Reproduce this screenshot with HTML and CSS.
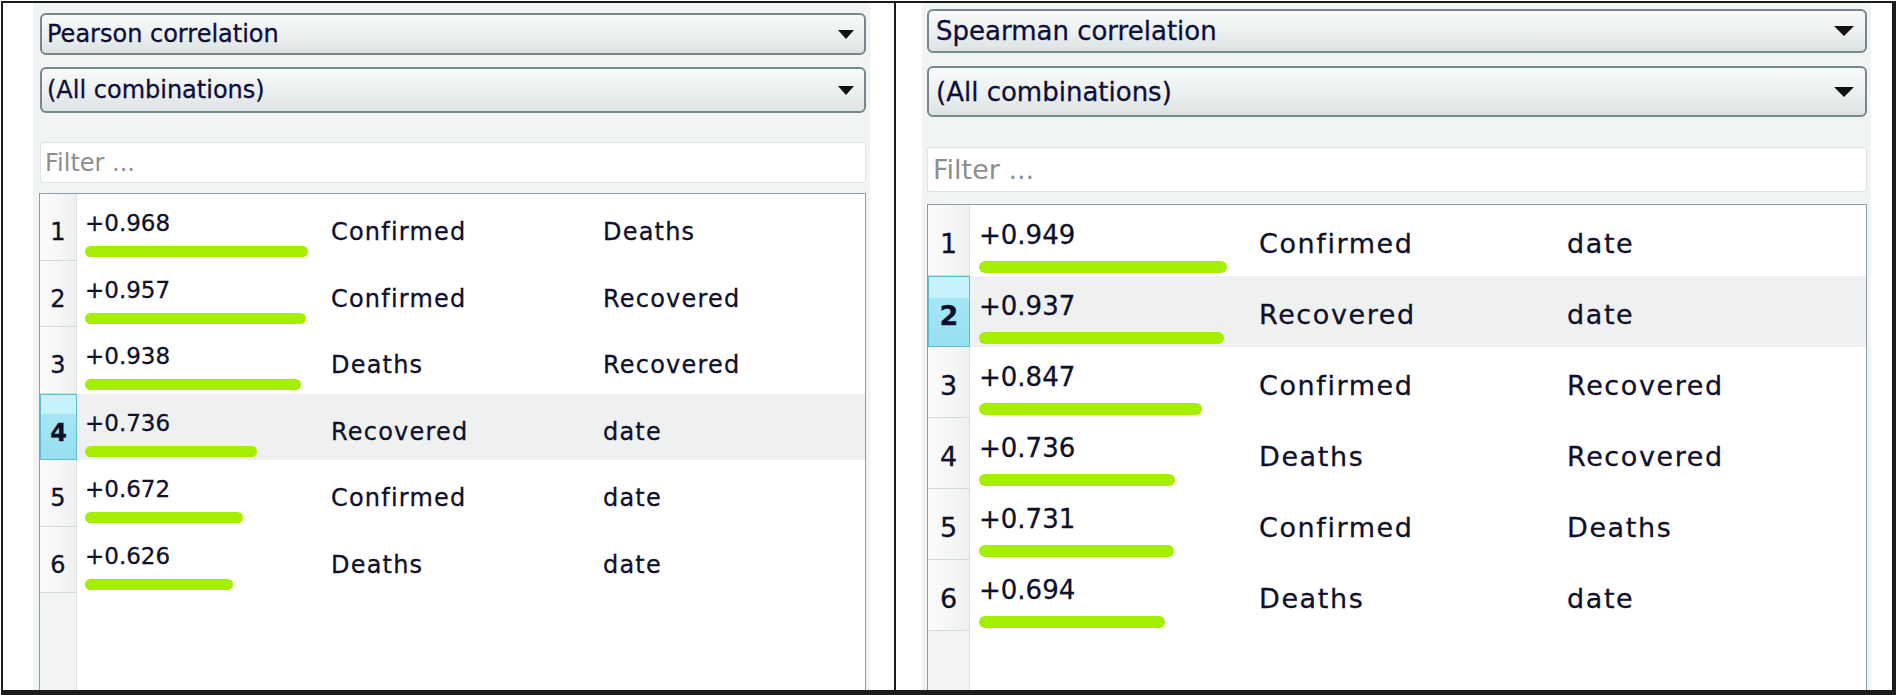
FILE: index.html
```html
<!DOCTYPE html>
<html lang="en">
<head>
  <meta charset="UTF-8" />
  <meta name="viewport" content="width=device-width, initial-scale=1.0"/>
  <title>Correlations</title>
  <link rel="stylesheet" href="styles.css">
</head>
<body>
  <div class="frame">
    <section class="panel panel-left">
      <div class="controls">
        <div class="combo"><span>Pearson correlation</span><i class="caret"></i></div>
        <div class="combo combo-second"><span>(All combinations)</span><i class="caret"></i></div>
        <div class="filter">Filter ...</div>
        <div class="list" id="pearson-list">
          <!-- Filled by JS -->
        </div>
      </div>
    </section>

    <section class="panel panel-right">
      <div class="controls">
        <div class="combo"><span>Spearman correlation</span><i class="caret"></i></div>
        <div class="combo combo-second"><span>(All combinations)</span><i class="caret"></i></div>
        <div class="filter">Filter ...</div>
        <div class="list" id="spearman-list">
          <!-- Filled by JS -->
        </div>
      </div>
    </section>
  </div>

  <script>
    const pearson = [
      [0.968, "Confirmed", "Deaths"],
      [0.957, "Confirmed", "Recovered"],
      [0.938, "Deaths", "Recovered"],
      [0.736, "Recovered", "date"],
      [0.672, "Confirmed", "date"],
      [0.626, "Deaths", "date"]
    ];

    const spearman = [
      [0.949, "Confirmed", "date"],
      [0.937, "Recovered", "date"],
      [0.847, "Confirmed", "Recovered"],
      [0.736, "Deaths", "Recovered"],
      [0.731, "Confirmed", "Deaths"],
      [0.694, "Deaths", "date"]
    ];

    // bar length grows with the score, scale differs per panel
    function fillList(id, rows, selected, slope, base) {
      let list = document.getElementById(id);
      list.innerHTML = "";

      rows.forEach((r, i) => {
        let row = document.createElement("div");
        row.className = "row" + (i + 1 === selected ? " selected" : "");
        let width = Math.round(slope * r[0] + base);
        row.innerHTML = `
          <div class="num">${i + 1}</div>
          <div class="score">
            <div class="value">+${r[0].toFixed(3)}</div>
            <div class="bar" style="width: ${width}px"></div>
          </div>
          <div class="name">${r[1]}</div>
          <div class="name">${r[2]}</div>
        `;
        list.appendChild(row);
      });

      let rest = document.createElement("div");
      rest.className = "row row-empty";
      rest.innerHTML = `<div class="num"></div>`;
      list.appendChild(rest);
    }

    fillList("pearson-list", pearson, 4, 219, 11);
    fillList("spearman-list", spearman, 2, 243, 17);
  </script>
</body>
</html>
```

FILE: styles.css
```css
* {
  box-sizing: border-box;
}

body {
  margin: 0;
  background: #fff;
  font-family: "DejaVu Sans", Verdana, sans-serif;
  color: #10102a;
  -webkit-text-stroke: 0.3px currentColor;
}

.frame {
  display: flex;
  height: 694px;
  margin: 1px 4px 0 1px;
  border: 2px solid #1c1c1c;
  border-right-width: 4px;
  border-bottom-width: 5px;
  overflow: hidden;
}

.panel {
  display: flex;
}

.panel-left {
  width: 893px;
  border-right: 2px solid #1c1c1c;
  padding: 0 24px 0 30px;
}

.panel-right {
  flex: 1;
  padding: 0 21px 0 26px;
}

.controls {
  flex: 1;
  display: flex;
  flex-direction: column;
  background: #f1f4f4;
}

.panel-left .controls {
  padding: 10px 4px 0 7px;
}

.panel-right .controls {
  padding: 6px 4px 0 5px;
}

/* dropdowns */
.combo {
  display: flex;
  align-items: center;
  justify-content: space-between;
  border: 2px solid #76888b;
  border-radius: 6px;
  background: linear-gradient(#f8fafa, #eef2f2 45%, #dce3e3);
  color: #0e0e3a;
}

.panel-left .combo {
  height: 42px;
  padding: 0 10px 0 5px;
  font-size: 24px;
}

.panel-left .combo-second {
  height: 46px;
  margin-top: 12px;
}

.panel-right .combo {
  height: 44px;
  padding: 0 11px 0 7px;
  font-size: 26px;
}

.panel-right .combo-second {
  height: 51px;
  margin-top: 13px;
}

.caret {
  width: 0;
  height: 0;
  border-left: 8px solid transparent;
  border-right: 8px solid transparent;
  border-top: 9px solid #111;
}

.panel-right .caret {
  border-left-width: 10px;
  border-right-width: 10px;
  border-top-width: 10px;
}

/* filter box */
.filter {
  display: flex;
  align-items: center;
  background: #fff;
  border: 1px solid #dde2e2;
  border-radius: 3px;
  color: #8e8e8e;
  -webkit-text-stroke: 0;
}

.panel-left .filter {
  height: 41px;
  margin-top: 29px;
  padding-left: 4px;
  font-size: 24px;
}

.panel-right .filter {
  height: 45px;
  margin-top: 30px;
  padding-left: 5px;
  font-size: 27px;
}

/* result list */
.list {
  flex: 1;
  display: flex;
  flex-direction: column;
  background: #fff;
  border: 1px solid #8e9ea8;
  border-bottom: none;
}

.panel-left .list {
  margin: 10px 0 0 -1px;
}

.panel-right .list {
  margin-top: 12px;
}

.row {
  display: grid;
}

.panel-left .row {
  grid-template-columns: 37px 254px 272px 1fr;
  height: 66.5px;
}

.panel-right .row {
  grid-template-columns: 42px 289px 308px 1fr;
  height: 71px;
}

.row.selected {
  background: #eff1f1;
}

.num {
  display: flex;
  justify-content: center;
  background: linear-gradient(to right, #fcfcfc, #eff1f1);
  border-right: 1px solid #dde1e1;
  border-bottom: 1px solid #d6dada;
  line-height: 1;
}

.row.selected .num {
  background: linear-gradient(#c6f2fb 0, #c6f2fb 30%, #a4e6f6 30%, #97dff1);
  border: 1px solid #5cbcd6;
  font-weight: bold;
}

.row-empty {
  flex: 1;
}

.row-empty .num {
  background: #f2f4f4;
  border-bottom: none;
}

.name {
  line-height: 1;
}

.panel-left .num,
.panel-left .name {
  padding-top: 26px;
  font-size: 24px;
}

.panel-left .name {
  letter-spacing: 1.2px;
}

.panel-right .num,
.panel-right .name {
  padding-top: 25px;
  font-size: 27px;
}

.panel-right .name {
  letter-spacing: 1.6px;
}

.value {
  line-height: 1;
}

.panel-left .score {
  padding: 18px 0 0 8px;
}

.panel-left .value {
  font-size: 23px;
}

.panel-right .score {
  padding: 17px 0 0 9px;
}

.panel-right .value {
  font-size: 26px;
}

.bar {
  background: #a4ee00;
  border-radius: 6px;
}

.panel-left .bar {
  height: 11px;
  margin-top: 11px;
}

.panel-right .bar {
  height: 12px;
  margin-top: 13px;
}
```
